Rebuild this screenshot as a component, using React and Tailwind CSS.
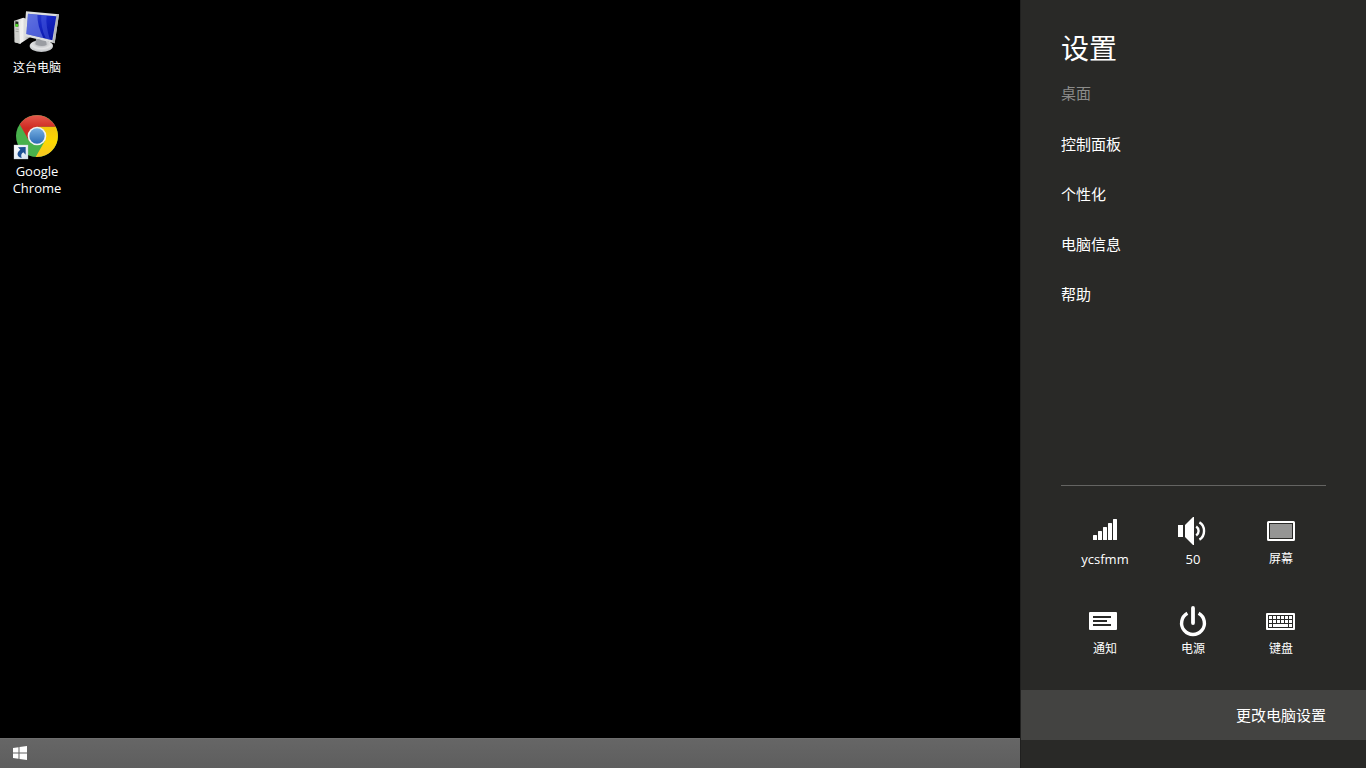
import { useState } from 'react';

const links = ['控制面板', '个性化', '电脑信息', '帮助'];

const SignalIcon = () => (
  <svg width="40" height="32" viewBox="0 0 40 32" fill="#fff">
    <rect x="8" y="20" width="4" height="5" rx="0.5" />
    <rect x="13" y="16" width="4" height="9" rx="0.5" />
    <rect x="18" y="12" width="4" height="13" rx="0.5" />
    <rect x="23" y="8" width="4" height="17" rx="0.5" />
    <rect x="28" y="4" width="4" height="21" rx="0.5" />
  </svg>
);

const VolumeIcon = () => (
  <svg width="40" height="32" viewBox="0 0 40 32" fill="#fff">
    <rect x="5" y="10" width="5" height="12" />
    <path d="M12 10 L20 2 H21 V30 H20 L12 22 Z" />
    <path
      d="M23.2 11.6 C26.4 13.8 26.4 18.2 23.2 20.4 M26.4 7.4 C32.6 11 32.6 21 26.4 24.6"
      fill="none"
      stroke="#fff"
      strokeWidth="2.4"
    />
  </svg>
);

const ScreenIcon = () => (
  <svg width="40" height="32" viewBox="0 0 40 32">
    <rect
      x="7"
      y="7"
      width="26"
      height="18"
      rx="0.5"
      fill="none"
      stroke="#fff"
      strokeWidth="2"
    />
    <rect x="9" y="9" width="22" height="14" fill="#959594" />
    <path d="M8.5 8.5 H31.5 V23.5 H8.5 Z" fill="none" stroke="#292927" />
  </svg>
);

const NoticeIcon = () => (
  <svg width="40" height="32" viewBox="0 0 40 32">
    <rect x="4" y="7" width="28" height="18" rx="1" fill="#fff" />
    <path d="M8 12 H26 M8 16 H22 M8 20 H26" stroke="#292927" strokeWidth="2" />
  </svg>
);

const PowerIcon = () => (
  <svg
    width="40"
    height="32"
    viewBox="0 0 40 32"
    fill="none"
    stroke="#fff"
    strokeWidth="3.4"
  >
    <path d="M14.4 8.2 A11.4 11.4 0 1 0 25.6 8.2" />
    <path d="M20 3 V18" strokeLinecap="round" strokeWidth="3.8" />
  </svg>
);

const KeyboardIcon = () => (
  <svg width="40" height="32" viewBox="0 0 40 32" fill="#fff">
    <rect x="5" y="8" width="29" height="17" rx="1" />
    <rect x="7" y="10" width="25" height="13" fill="#292927" />
    {[8, 12, 16, 20, 24, 28].map((x) => (
      <path key={x} d={`M${x} 11 h3 v3 h-3 Z M${x} 15 h3 v3 h-3 Z`} />
    ))}
    <path d="M8 19 h3 v3 h-3 Z M12 19 h15 v3 h-15 Z M28 19 h3 v3 h-3 Z" />
  </svg>
);

const ComputerIcon = () => (
  <svg width="48" height="48" viewBox="39 24 144 144">
    <defs>
      <linearGradient id="screen" x1="0" y1="0" x2="1" y2="1">
        <stop offset="0" stopColor="#3a4cd0" />
        <stop offset="0.45" stopColor="#1526c4" />
        <stop offset="1" stopColor="#0612a0" />
      </linearGradient>
      <linearGradient id="tower" x1="0" y1="0" x2="1" y2="0">
        <stop offset="0" stopColor="#b9bbb9" />
        <stop offset="0.5" stopColor="#f4f4f2" />
        <stop offset="1" stopColor="#a4a6a8" />
      </linearGradient>
      <radialGradient id="stand" cx="0.5" cy="0.3" r="0.7">
        <stop offset="0" stopColor="#a0a3a7" />
        <stop offset="0.6" stopColor="#e3e4e5" />
        <stop offset="1" stopColor="#b9bcbf" />
      </radialGradient>
    </defs>
    <path d="M43 62 L70 53 L90 60 V112 L60 131 L44 127 Z" fill="url(#tower)" />
    <path d="M43 62 L59 65 L61 131 L44 127 Z" fill="#cfd0cd" />
    <path d="M59 65 L61 131" stroke="#fff" strokeWidth="2" />
    <path d="M46 64 L55 65 V80 L46 79 Z" fill="#1d241d" />
    <circle cx="50" cy="76" r="5" fill="#53d52c" />
    <path d="M47 87 L56 88 M47 94 L56 95" stroke="#93958f" strokeWidth="2" />
    <ellipse cx="124" cy="138" rx="35" ry="18" fill="url(#stand)" />
    <path d="M108 116 L138 122 L140 135 C130 140 115 139 106 133 Z" fill="#9a9da2" />
    <path d="M78 34 L177 43 L164 130 L72 108 Z" fill="#dcdedf" />
    <path d="M177 43 L164 130 L158 128 L169 44 Z" fill="#b4b7ba" />
    <path d="M84 41 L169 49 L157 121 L79 102 Z" fill="url(#screen)" />
    <path d="M84 41 L112 44 C112 66 118 90 130 114 L79 102 Z" fill="#8a9cf2" opacity="0.5" />
    <path d="M124 45 L140 46 C137 70 142 94 150 119 L138 116 C126 92 122 68 124 45 Z" fill="#6377f0" opacity="0.35" />
  </svg>
);

const ChromeIcon = () => (
  <svg width="48" height="48" viewBox="39 21 144 144">
    <defs>
      <linearGradient id="red" x1="0" y1="0" x2="0" y2="1">
        <stop offset="0" stopColor="#e4594c" />
        <stop offset="0.5" stopColor="#cf2b23" />
        <stop offset="1" stopColor="#c4281f" />
      </linearGradient>
      <linearGradient id="yellow" x1="0" y1="0" x2="0" y2="1">
        <stop offset="0" stopColor="#f2c60f" />
        <stop offset="0.5" stopColor="#fdd901" />
        <stop offset="1" stopColor="#f7c526" />
      </linearGradient>
      <linearGradient id="blue" x1="0" y1="0" x2="0" y2="1">
        <stop offset="0" stopColor="#77afe2" />
        <stop offset="1" stopColor="#2c6cb5" />
      </linearGradient>
      <linearGradient id="badge" x1="0" y1="0" x2="1" y2="1">
        <stop offset="0" stopColor="#fff" />
        <stop offset="1" stopColor="#d3e0ee" />
      </linearGradient>
    </defs>
    <circle cx="111" cy="93" r="63" fill="#48b14c" />
    <path d="M167 65 A63 63 0 0 1 107 156 L135 107 L111 65 Z" fill="url(#yellow)" />
    <path d="M59 58 A63 63 0 0 1 167 65 H111 L87 107 Z" fill="url(#red)" />
    <circle cx="111" cy="93" r="28" fill="#f1f3f2" />
    <circle cx="111" cy="93" r="23" fill="url(#blue)" />
    <rect x="42" y="120" width="42" height="42" fill="url(#badge)" stroke="#c4cbd2" />
    <path
      d="M54 127 L77 126 L77 149 L70 142 C64 146 62 151 65 159 C51 156 48 143 61 134 Z"
      fill="#1c4f93"
    />
  </svg>
);

const WindowsIcon = () => (
  <svg width="14" height="14" viewBox="0 0 14 14" fill="#fff">
    <path d="M0 2 L5.5 1.2 V6.5 H0 Z M6.5 1 L14 0 V6.5 H6.5 Z M0 7.5 H5.5 V12.8 L0 12 Z M6.5 7.5 H14 V14 L6.5 13 Z" />
  </svg>
);

const tiles = [
  { text: 'ycsfmm', Icon: SignalIcon, latin: true },
  { text: '50', Icon: VolumeIcon, latin: true },
  { text: '屏幕', Icon: ScreenIcon },
  { text: '通知', Icon: NoticeIcon },
  { text: '电源', Icon: PowerIcon },
  { text: '键盘', Icon: KeyboardIcon },
];

const Shortcut = ({ text, Icon, className }) => (
  <button className="flex w-full flex-col items-center gap-[3px]">
    <Icon />
    <span className={`px-2 leading-[17px] ${className}`}>{text}</span>
  </button>
);

const App = () => {
  const [selected, setSelected] = useState(null);

  return (
    <div className="flex min-h-screen bg-black font-['Open_Sans','Noto_Sans_CJK_SC',sans-serif] text-white">
      <div className="flex flex-1 flex-col">
        <main className="flex-1 pt-2">
          <div className="flex w-[74px] flex-col gap-9">
            <Shortcut text="这台电脑" Icon={ComputerIcon} className="text-xs" />
            <Shortcut
              text="Google Chrome"
              Icon={ChromeIcon}
              className="text-[13px]"
            />
          </div>
        </main>
        <footer className="flex h-[30px] items-start border-t border-[#6d6d6d] bg-linear-to-b from-[#666] to-[#5e5e5e] px-[13px] pt-[7px]">
          <button aria-label="开始">
            <WindowsIcon />
          </button>
        </footer>
      </div>

      <aside className="flex w-[346px] flex-col border-l border-[#20201f] bg-[#292927]">
        <header className="px-10 pt-7">
          <h1 className="text-[28px] leading-10">设置</h1>
          <h2 className="mt-3 text-[15px] leading-[26px] text-[#8c8c8a]">
            桌面
          </h2>
        </header>
        <nav className="mt-[13px] flex flex-1 flex-col text-[15px]">
          {links.map((text) => (
            <a
              key={text}
              href="#"
              className="flex h-[50px] items-center px-10"
            >
              {text}
            </a>
          ))}
        </nav>
        <section className="mx-10 border-t border-[#646462] pt-[29px] pb-8">
          <div className="grid w-[264px] grid-cols-3 gap-y-[37px]">
            {tiles.map(({ text, Icon, latin }) => (
              <button
                key={text}
                aria-pressed={selected === text}
                className="flex flex-col items-center gap-[3px]"
                onClick={() => setSelected(text)}
              >
                <Icon />
                <span
                  className={
                    latin
                      ? 'text-[13px] leading-[18px]'
                      : 'text-xs leading-[18px]'
                  }
                >
                  {text}
                </span>
              </button>
            ))}
          </div>
        </section>
        <button className="mb-7 h-[50px] bg-[#434341] px-10 text-right text-[15px]">
          更改电脑设置
        </button>
      </aside>
    </div>
  );
};

export default App;
